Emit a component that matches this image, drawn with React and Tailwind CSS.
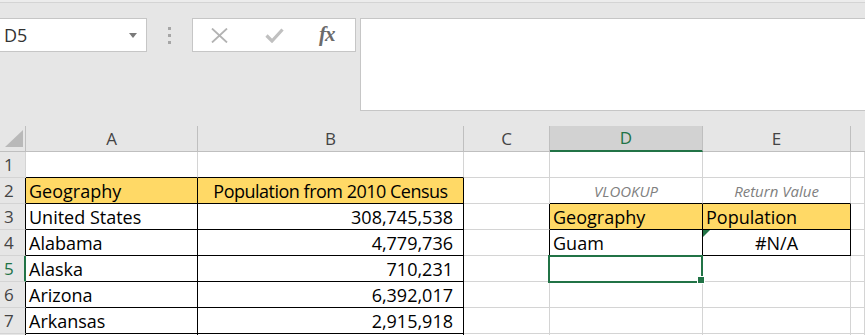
import React from "react";

function Row({ children, className = "" }) {
  return <div className={"flex h-[26px] shrink-0 " + className}>{children}</div>;
}

function RH({ n, cls = "border-r-[#d4d4d4]", extra = "" }) {
  return (
    <div
      className={
        "w-[26px] shrink-0 h-full border-r border-b border-b-[#d4d4d4] bg-[#e6e6e6] flex items-center pl-[4px] text-[17px] text-[#444] " +
        cls +
        " " +
        extra
      }
    >
      {n}
    </div>
  );
}

function C({ w, r = "border-r-[#d4d4d4]", b = "border-b-[#d4d4d4]", bg = "bg-white", align = "justify-start pl-[3px]", children, extra = "" }) {
  return (
    <div
      className={
        "relative shrink-0 h-full border-r border-b flex items-center pt-[1px] text-[18px] text-black whitespace-nowrap " +
        w + " " + r + " " + b + " " + bg + " " + align + " " + extra
      }
    >
      {children}
    </div>
  );
}

const WA = "w-[172px]";
const WB = "w-[266px]";
const WC = "w-[86px]";
const WD = "w-[153px]";
const WE = "w-[148px]";
const WF = "flex-1";
const Y = "bg-[#ffd966]";
const BR = "border-r-black";
const BB = "border-b-black";
const NUM = "justify-end pr-[10px]";

export default function App() {
  return (
    <div className="w-[865px] h-[335px] overflow-hidden bg-[#e6e6e6] font-['Open_Sans',sans-serif] flex flex-col">
      {/* toolbar */}
      <div className="h-[126px] shrink-0 flex flex-col">
        <div className="h-[2px] bg-[#ececec] shrink-0"></div>
        <div className="border-t border-t-[#d4d4d4] pt-[15px] flex items-start">
          <div className="ml-[-1px] w-[148px] h-[34px] bg-white border border-[#c6c6c6] flex items-center pl-[4px] relative">
            <span className="text-[18px] text-[#333] leading-none">D5</span>
            <svg className="absolute left-[129px] top-[14px]" width="8" height="5" viewBox="0 0 8 5">
              <path d="M0 0 L8 0 L4 5 Z" fill="#7a7a7a" />
            </svg>
          </div>
          <div className="w-[45px] h-[34px] flex flex-col items-center justify-center gap-[4px]">
            <div className="w-[3px] h-[3px] bg-[#a6a6a6]"></div>
            <div className="w-[3px] h-[3px] bg-[#a6a6a6]"></div>
            <div className="w-[3px] h-[3px] bg-[#a6a6a6]"></div>
          </div>
          <div className="w-[164px] h-[34px] bg-white border border-[#c6c6c6] flex items-center relative">
            <svg className="absolute left-[18px] top-[9px]" width="17" height="15" viewBox="0 0 17 15">
              <path d="M1 0.5 L16 14.5 M16 0.5 L1 14.5" stroke="#b3b3b3" strokeWidth="1.8" fill="none" />
            </svg>
            <svg className="absolute left-[72px] top-[9px]" width="19" height="15" viewBox="0 0 19 15">
              <path d="M1.5 7.5 L7 13 L17.5 1.5" stroke="#c0c0c0" strokeWidth="3.2" fill="none" />
            </svg>
            <span className="absolute left-[126px] top-[5px] font-['Liberation_Serif',serif] italic font-bold text-[21px] text-[#6b6b6b] leading-none tracking-[-1px]">
              fx
            </span>
          </div>
          <div className="ml-[4px] mr-[-2px] flex-1 h-[93px] bg-white border border-[#c6c6c6]"></div>
        </div>
      </div>

      {/* column headers */}
      <div className="flex h-[26px] shrink-0 text-[17px] text-[#444]">
        <div className="relative w-[26px] shrink-0 h-full border-r border-r-[#bfbfbf] border-b border-b-[#bfbfbf]">
          <svg className="absolute left-[5px] top-[4px]" width="18" height="17" viewBox="0 0 18 17">
            <path d="M18 0 L18 17 L0 17 Z" fill="#b9b9b9" />
          </svg>
        </div>
        <div className={WA + " shrink-0 h-full border-r border-r-[#bfbfbf] border-b border-b-[#bfbfbf] flex items-center justify-center"}>A</div>
        <div className={WB + " shrink-0 h-full border-r border-r-[#bfbfbf] border-b border-b-[#bfbfbf] flex items-center justify-center"}>B</div>
        <div className={WC + " shrink-0 h-full border-r border-r-[#bfbfbf] border-b border-b-[#bfbfbf] flex items-center justify-center"}>C</div>
        <div className={WD + " shrink-0 h-full border-r border-r-[#bfbfbf] border-b-2 border-b-[#217346] bg-[#d2d2d2] text-[#217346] flex items-center justify-center"}>D</div>
        <div className={WE + " shrink-0 h-full border-r border-r-[#bfbfbf] border-b border-b-[#bfbfbf] flex items-center justify-center"}>E</div>
        <div className={WF + " h-full border-b border-b-[#bfbfbf]"}></div>
      </div>

      {/* row 1 */}
      <Row>
        <RH n="1" />
        <C w={WA} b={BB} />
        <C w={WB} b={BB} />
        <C w={WC} />
        <C w={WD} />
        <C w={WE} />
        <C w={WF} />
      </Row>
      {/* row 2 */}
      <Row>
        <RH n="2" cls={BR} />
        <C w={WA} r={BR} b={BB} bg={Y}>Geography</C>
        <C w={WB} r={BR} b={BB} bg={Y} align="justify-center" extra="tracking-[-0.5px]">Population from 2010 Census</C>
        <C w={WC} />
        <C w={WD} b={BB} align="justify-center" extra="italic !text-[15px] !text-[#7f7f7f]">VLOOKUP</C>
        <C w={WE} b={BB} align="justify-center" extra="italic !text-[15px] !text-[#7f7f7f]">Return Value</C>
        <C w={WF} />
      </Row>
      {/* row 3 */}
      <Row>
        <RH n="3" cls={BR} />
        <C w={WA} r={BR} b={BB}>United States</C>
        <C w={WB} r={BR} b={BB} align={NUM}>308,745,538</C>
        <C w={WC} r={BR} />
        <C w={WD} r={BR} b={BB} bg={Y}>Geography</C>
        <C w={WE} r={BR} b={BB} bg={Y}>Population</C>
        <C w={WF} />
      </Row>
      {/* row 4 */}
      <Row>
        <RH n="4" cls={BR} />
        <C w={WA} r={BR} b={BB}>Alabama</C>
        <C w={WB} r={BR} b={BB} align={NUM}>4,779,736</C>
        <C w={WC} r={BR} />
        <C w={WD} r={BR} b={BB}>Guam</C>
        <C w={WE} r={BR} b={BB} align="justify-center">
          <svg className="absolute left-0 top-0" width="7" height="7" viewBox="0 0 7 7">
            <path d="M0 0 L7 0 L0 7 Z" fill="#217346" />
          </svg>
          #N/A
        </C>
        <C w={WF} />
      </Row>
      {/* row 5 */}
      <Row>
        <RH n="5" cls="border-r-2 border-r-[#217346] !text-[#217346] bg-[#dedede]" />
        <C w={WA} r={BR} b={BB}>Alaska</C>
        <C w={WB} r={BR} b={BB} align={NUM}>710,231</C>
        <C w={WC} />
        <C w={WD} extra="z-10">
          <div className="absolute left-[-2px] top-[-1px] w-[155px] h-[28px] border-2 border-[#217346]"></div>
          <div className="absolute left-[147px] top-[20px] w-[8px] h-[8px] bg-[#217346] border border-white"></div>
        </C>
        <C w={WE} />
        <C w={WF} />
      </Row>
      {/* row 6 */}
      <Row>
        <RH n="6" cls={BR} />
        <C w={WA} r={BR} b={BB}>Arizona</C>
        <C w={WB} r={BR} b={BB} align={NUM}>6,392,017</C>
        <C w={WC} />
        <C w={WD} />
        <C w={WE} />
        <C w={WF} />
      </Row>
      {/* row 7 */}
      <Row>
        <RH n="7" cls={BR} />
        <C w={WA} r={BR} b={BB}>Arkansas</C>
        <C w={WB} r={BR} b={BB} align={NUM}>2,915,918</C>
        <C w={WC} />
        <C w={WD} />
        <C w={WE} />
        <C w={WF} />
      </Row>
      <Row>
        <RH n="" cls={BR} />
        <C w={WA} r={BR} />
        <C w={WB} r={BR} />
        <C w={WC} />
        <C w={WD} />
        <C w={WE} />
        <C w={WF} />
      </Row>
    </div>
  );
}
